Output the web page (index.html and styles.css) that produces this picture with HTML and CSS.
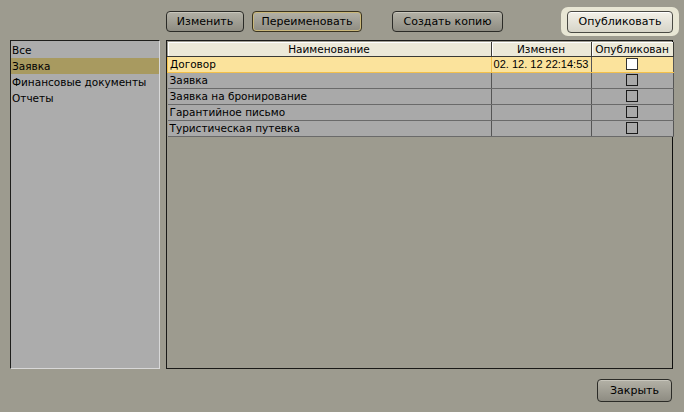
FILE: index.html
```html
<!DOCTYPE html>
<html>
<head>
<meta charset="utf-8">
<link rel="stylesheet" href="styles.css">
</head>
<body>
<div class="app">
  <div class="toolbar">
    <button class="btn btn-edit">Изменить</button>
    <button class="btn btn-rename focus">Переименовать</button>
    <button class="btn btn-copy">Создать копию</button>
    <div class="halo"><button class="btn btn-pub light">Опубликовать</button></div>
  </div>
  <div class="main">
    <ul class="cats">
      <li>Все</li>
      <li class="sel">Заявка</li>
      <li>Финансовые документы</li>
      <li>Отчеты</li>
    </ul>
    <div class="grid">
      <table>
        <thead>
          <tr><th class="c-name">Наименование</th><th class="c-date">Изменен</th><th class="c-pub">Опубликован</th></tr>
        </thead>
        <tbody>
          <tr class="cur"><td>Договор</td><td class="date">02. 12. 12 22:14:53</td><td class="pub"><span class="chk white"></span></td></tr>
          <tr><td>Заявка</td><td></td><td class="pub"><span class="chk"></span></td></tr>
          <tr><td>Заявка на бронирование</td><td></td><td class="pub"><span class="chk"></span></td></tr>
          <tr><td>Гарантийное письмо</td><td></td><td class="pub"><span class="chk"></span></td></tr>
          <tr><td>Туристическая путевка</td><td></td><td class="pub"><span class="chk"></span></td></tr>
        </tbody>
      </table>
    </div>
  </div>
  <div class="footer">
    <button class="btn btn-close">Закрыть</button>
  </div>
</div>
</body>
</html>
```
FILE: styles.css
```css
html, body {
  margin: 0;
  padding: 0;
  background: #9d9b8f;
  width: 684px;
  height: 412px;
  overflow: hidden;
}
body {
  font-family: "DejaVu Sans", Verdana, sans-serif;
  font-size: 10.5px;
  color: #000;
}
.app {
  display: flex;
  flex-direction: column;
  height: 412px;
}
.toolbar {
  display: flex;
  align-items: center;
  height: 40px;
  padding-left: 166px;
  box-sizing: border-box;
  padding-top: 2px;
}
.btn {
  font-family: inherit;
  font-size: 11px;
  color: #000;
  height: 21px;
  border: 1px solid #2b2b27;
  border-radius: 4px;
  background: linear-gradient(#b3b1a6, #8e8c82);
  box-shadow: inset 0 1px 0 #c8c6bc;
  padding: 0;
  margin: 0;
}
.btn.focus {
  border-color: #3a3420;
  box-shadow: inset 0 0 0 1px #c9b77a;
}
.btn.light {
  background: linear-gradient(#f3f1e8, #d6d4c8);
  box-shadow: inset 0 1px 0 #fff;
  border-color: #4a4a44;
}
.btn-edit { width: 78px; }
.btn-rename { width: 110px; margin-left: 8px; }
.btn-copy { width: 111px; margin-left: 30px; }
.halo {
  margin-left: 58px;
  padding: 4px 6px 3px 6px;
  background: #e8e6d4;
  border-radius: 7px;
  display: flex;
}
.btn-pub { width: 106px; height: 22px; }
.main {
  display: flex;
  height: 329px;
  padding-left: 10px;
  box-sizing: border-box;
}
.cats {
  list-style: none;
  margin: 0;
  padding: 1px 0 0 0;
  width: 150px;
  height: 329px;
  box-sizing: border-box;
  background: #acacac;
  border: 1px solid #1e1e1c;
  border-bottom-color: #d8d8d8;
  border-right-color: #d8d8d8;
}
.cats li {
  height: 16px;
  line-height: 16px;
  padding-left: 1px;
}
.cats li.sel {
  background: #a89a60;
}
.grid {
  margin-left: 6px;
  width: 507px;
  height: 329px;
  box-sizing: border-box;
  border: 1px solid #1a1a18;
  border-right: 1px solid #0d0d0c;
  padding-top: 1px;
}
table {
  border-collapse: collapse;
  width: 504px;
  table-layout: fixed;
}
th {
  background: #ece9d8;
  font-weight: normal;
  height: 14px;
  line-height: 14px;
  padding: 0;
  text-align: center;
  border-right: 1px solid #3a3a36;
  border-bottom: 1px solid #3a3a36;
  box-shadow: inset 1px 1px 0 #fff;
}
.c-name { width: 323px; }
.c-date { width: 99px; }
.c-pub { width: 81px; }
td {
  background: #a9a9a9;
  height: 15px;
  line-height: 15px;
  padding: 0 0 0 2px;
  border-right: 1px solid #555;
  border-bottom: 1px solid #6a6a6a;
  white-space: nowrap;
  overflow: hidden;
}
tr.cur td {
  background: #fbe39c;
  border-top: 1px solid #f3c04a;
  border-bottom: 1px solid #f3c04a;
}
tr.cur td:first-child { border-left: 1px solid #f3c04a; border-right-color: #f3c04a; }
td.date {
  text-align: center;
  padding: 0;
  font-family: "Liberation Sans", Arial, sans-serif;
  font-size: 11px;
}
td.pub { text-align: center; padding: 0; }
.chk {
  display: inline-block;
  width: 10px;
  height: 10px;
  border: 1px solid #1a1a1a;
  vertical-align: middle;
  margin-top: -2px;
  background: #a9a9a9;
}
.chk.white { background: #fff; border-color: #333; }
.footer {
  display: flex;
  justify-content: flex-end;
  padding-right: 12px;
  padding-top: 10px;
}
.btn-close { width: 75px; height: 23px; }
```
